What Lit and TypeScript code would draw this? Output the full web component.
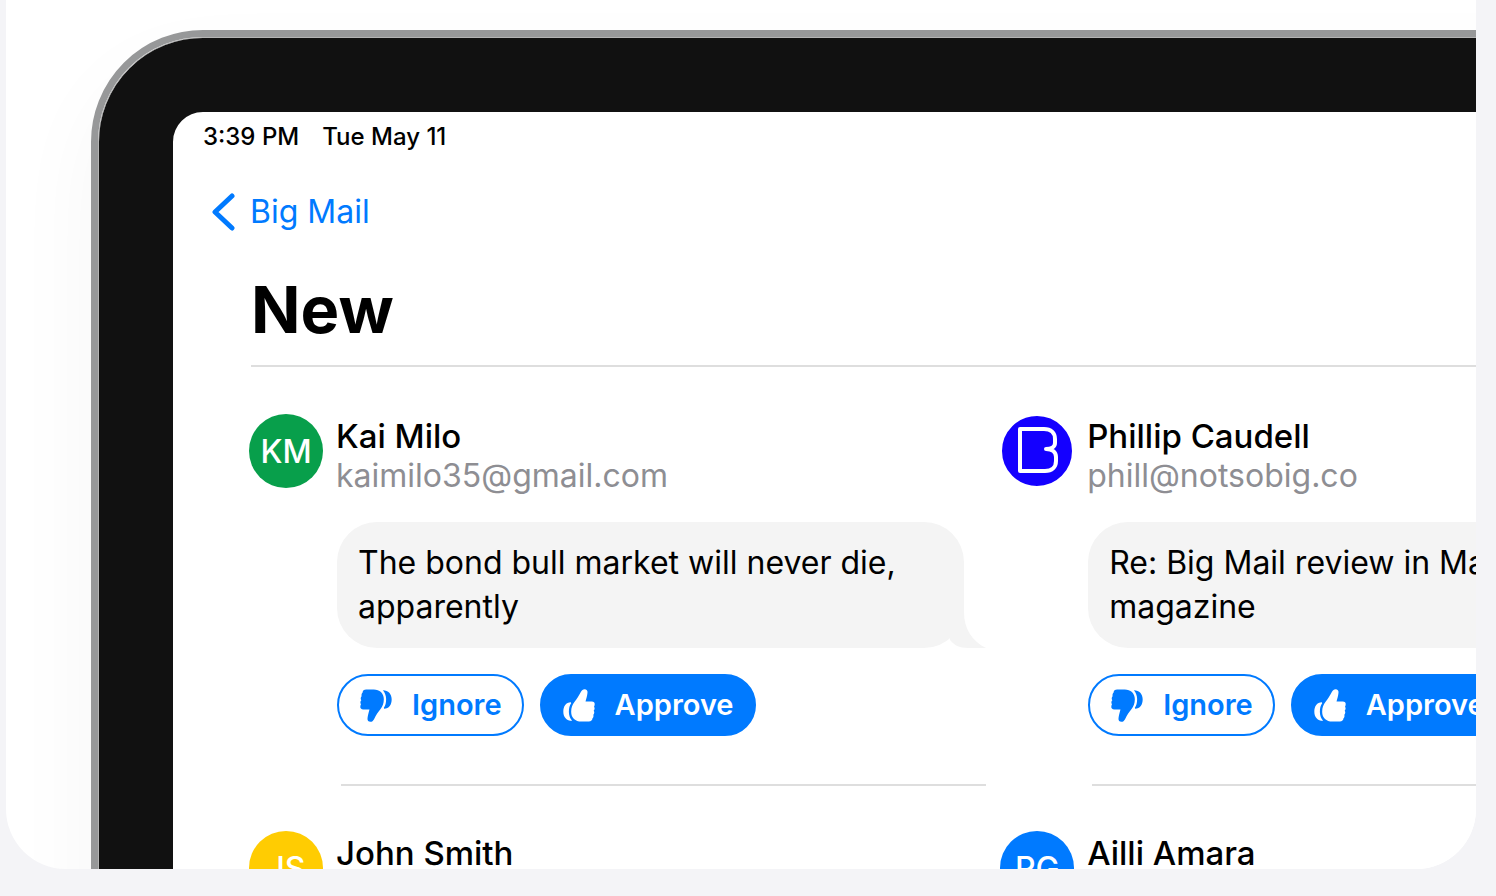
import { LitElement, html, css, svg, nothing } from "lit";
import { customElement, property } from "lit/decorators.js";

interface Sender {
  name: string;
  email?: string;
  subject?: string;
  initials?: string;
  tone: string;
}

const senders: Sender[] = [
  {
    name: "Kai Milo",
    email: "kaimilo35@gmail.com",
    subject: "The bond bull market will never die, apparently",
    initials: "KM",
    tone: "green",
  },
  {
    name: "Phillip Caudell",
    email: "phill@notsobig.co",
    subject: "Re: Big Mail review in Macworld magazine",
    tone: "brand",
  },
  { name: "John Smith", initials: "JS", tone: "yellow" },
  { name: "Ailli Amara", initials: "PG", tone: "blue" },
];

const hand = svg`
  <path d="M66 0C72 0 76 4 75 11C74 21 71 30 69 38H88C94 38 98 42 97 47C97 50 96 52 95 54C98 58 97 63 94 66C97 70 96 75 93 78C94 83 93 87 90 90C90 95 86 99 79 99H56C38 99 25 88 25 69C25 56 29 47 35 39C42 31 49 20 55 8C58 3 61 0 66 0Z"/>
  <path d="M24 40C9 40 1 52 1 69C1 85 11 97 28 97C22 90 18 81 18 70C18 58 20 50 25 43Z"/>`;

@customElement("sender-card")
export class SenderCard extends LitElement {
  @property({ attribute: false }) sender!: Sender;

  static styles = css`
    :host {
      display: block;
      min-width: 0;
    }
    .head {
      display: flex;
      gap: 13px;
    }
    .avatar {
      flex: none;
      box-sizing: border-box;
      width: 74px;
      height: 74px;
      border-radius: 50%;
      display: grid;
      place-items: center;
      color: #fff;
      font-size: 32px;
      font-weight: 500;
    }
    .green { background: #089f4b; }
    .yellow { background: #ffcc02; }
    .blue { background: #007aff; }
    .brand {
      border: 2px solid #fff;
      background: #1400ff;
    }
    .brand svg {
      width: 70px;
      height: 70px;
    }
    .who {
      min-width: 0;
      padding-top: 2px;
      white-space: nowrap;
    }
    .name {
      margin: 0;
      font-size: 33px;
      font-weight: 500;
      line-height: 40px;
    }
    .email {
      margin: 0;
      font-size: 32px;
      line-height: 40px;
      color: #8e8e93;
    }
    .body {
      padding: 26px 0 0 88px;
    }
    .bubble {
      position: relative;
      margin: 0 22px 26px 0;
      padding: 19px 20px 19px 21px;
      border-radius: 40px;
      background: #f4f4f4;
      font-size: 32px;
      line-height: 44px;
    }
    .tail {
      position: absolute;
      right: -22px;
      bottom: 0;
      width: 38px;
      height: 48px;
    }
    .actions {
      display: flex;
      gap: 16px;
    }
    button {
      display: flex;
      align-items: center;
      gap: 20px;
      height: 62px;
      padding: 0 20px 0 21px;
      border: 2px solid #007aff;
      border-radius: 31px;
      background: #fff;
      color: #007aff;
      font: 600 29px/36px Inter, sans-serif;
      cursor: pointer;
    }
    .approve {
      background: #007aff;
      color: #fff;
    }
    .thumb {
      flex: none;
      width: 32px;
      height: 33px;
      fill: currentColor;
    }
    .down {
      transform: rotate(180deg);
    }
    .rule {
      height: 2px;
      margin: 48px 0 0 4px;
      border: 0;
      background: #dedede;
    }
  `;

  render() {
    const s = this.sender;
    return html`
      <article>
        <header class="head">
          <div class="avatar ${s.tone}">
            ${s.initials ??
            html`<svg viewBox="0 0 70 70" fill="none" stroke="#fff" stroke-width="4" stroke-linejoin="round" aria-hidden="true">
              <path d="M18 13H42C49 13 53 17 53 23V27C53 31 49 33 44 33C50 33 54 36 54 41V45C54 51 50 55 43 55H18Z" />
            </svg>`}
          </div>
          <div class="who">
            <h2 class="name">${s.name}</h2>
            ${s.email ? html`<p class="email">${s.email}</p>` : nothing}
          </div>
        </header>
        ${s.subject ? this.renderMessage(s.subject) : nothing}
      </article>
    `;
  }

  private renderMessage(subject: string) {
    return html`
      <div class="body">
        <div class="bubble">
          ${subject}
          <svg class="tail" viewBox="0 0 38 48" fill="#f4f4f4" aria-hidden="true">
            <path d="M16 0V12C16 29 24 41 38 48H20C11 48 6 45 2 40L0 20Z" />
          </svg>
        </div>
        <div class="actions">
          <button type="button">
            <svg class="thumb down" viewBox="0 0 98 100" aria-hidden="true">${hand}</svg>Ignore
          </button>
          <button type="button" class="approve">
            <svg class="thumb" viewBox="0 0 98 100" aria-hidden="true">${hand}</svg>Approve
          </button>
        </div>
        <hr class="rule" />
      </div>
    `;
  }
}

@customElement("app-root")
export class AppRoot extends LitElement {
  static styles = css`
    :host {
      display: block;
      box-sizing: border-box;
      height: 100vh;
      padding: 0 20px 27px 6px;
      background: #f4f4f7;
      color: #000;
      font-family: Inter, sans-serif;
    }
    .panel {
      box-sizing: border-box;
      height: 100%;
      padding: 30px 0 0 85px;
      overflow: hidden;
      border-radius: 0 0 60px 60px;
      background: #fff;
    }
    .device {
      box-sizing: border-box;
      width: 131%;
      border: 7px solid #979899;
      border-radius: 112px;
      box-shadow: 0 40px 90px rgba(0, 0, 0, 0.04);
    }
    .bezel {
      border: 1px solid #b4b4b4;
      border-radius: 105px;
    }
    .screen {
      padding: 5px 86px 60px 76px;
      border: 74px solid #111;
      border-radius: 104px;
      background: #fff;
    }
    .status {
      display: flex;
      gap: 23px;
      margin-left: -46px;
      font-size: 24px;
      font-weight: 500;
      line-height: 40px;
    }
    .back {
      display: inline-flex;
      align-items: center;
      gap: 15px;
      margin: 32px 0 0 -38px;
      color: #007aff;
      font-size: 32px;
      line-height: 46px;
      text-decoration: none;
    }
    .chevron {
      width: 24px;
      height: 38px;
    }
    .title {
      margin: 35px 0 0 2px;
      padding-bottom: 15px;
      border-bottom: 2px solid #dedede;
      font-size: 65px;
      font-weight: 700;
      line-height: 80px;
    }
    .grid {
      display: grid;
      grid-template-columns: 1fr 1fr;
      gap: 45px 14px;
      padding-top: 47px;
    }
  `;

  render() {
    return html`
      <main class="panel">
        <div class="device">
          <div class="bezel">
            <div class="screen">
              <div class="status"><span>3:39 PM</span><span>Tue May 11</span></div>
              <nav>
                <a class="back" href="#">
                  <svg class="chevron" viewBox="0 0 24 38" fill="none" stroke="currentColor" stroke-width="5" stroke-linecap="round" stroke-linejoin="round" aria-hidden="true">
                    <path d="M21 3L4 19L21 35" />
                  </svg>
                  Big Mail
                </a>
              </nav>
              <h1 class="title">New</h1>
              <div class="grid">
                ${senders.map((s) => html`<sender-card .sender=${s}></sender-card>`)}
              </div>
            </div>
          </div>
        </div>
      </main>
    `;
  }
}
